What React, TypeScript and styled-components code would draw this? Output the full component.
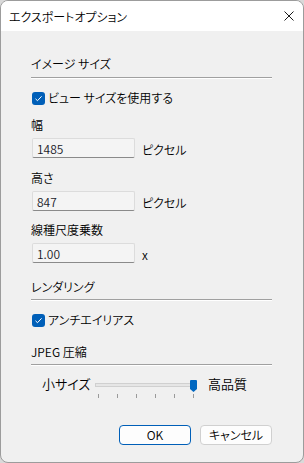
import styled, { createGlobalStyle } from 'styled-components';

const GlobalStyle = createGlobalStyle`
    html, body {
        margin: 0;
        padding: 0;
        background: #d9d9d9;
    }
    body {
        font-family: 'Noto Sans CJK JP', 'Noto Sans', sans-serif;
        font-size: 12px;
        font-weight: 350;
        font-feature-settings: 'palt';
        color: #000;
    }
`;

const Window = styled.div`
    width: 304px;
    height: 463px;
    box-sizing: border-box;
    border: 1px solid #9c9c9c;
    border-radius: 8px;
    background: #f0f0f0;
    overflow: hidden;
    display: flex;
    flex-direction: column;
`;

const TitleBar = styled.div`
    height: 30px;
    flex-shrink: 0;
    background: #ffffff;
    display: flex;
    align-items: center;
    justify-content: space-between;
    padding: 0 9px 0 8px;
`;

const Title = styled.div`
    font-size: 12px;
    line-height: 16px;
    margin-top: 1px;
`;

const CloseButton = styled.div`
    width: 10px;
    height: 10px;
    display: flex;
    margin-top: -1px;
`;

const Body = styled.div`
    display: flex;
    flex-direction: column;
    padding: 25px 31px 0 30px;
`;

const SectionTitle = styled.div`
    line-height: 16px;
    height: 16px;
    margin-top: ${(props: any) => props.gap || 0}px;
`;

const Separator = styled.div`
    height: 0;
    border-top: 1px solid #a0a0a0;
    border-bottom: 1px solid #ffffff;
    margin-top: ${(props: any) => props.gap || 5}px;
`;

const CheckRow = styled.label`
    display: flex;
    align-items: center;
    gap: 3px;
    height: 16px;
    line-height: 16px;
    margin-top: 11px;
`;

const CheckBox = styled.span`
    width: 13px;
    height: 13px;
    border-radius: 3px;
    background: #005fb8;
    display: flex;
    align-items: center;
    justify-content: center;
    margin-left: 1px;
`;

const FieldLabel = styled.div`
    line-height: 16px;
    height: 16px;
    margin-top: ${(props: any) => props.gap || 11}px;
`;

const FieldRow = styled.div`
    display: flex;
    align-items: center;
    margin-top: 5px;
`;

const TextBox = styled.div`
    width: 103px;
    height: 20px;
    box-sizing: border-box;
    margin-left: 1px;
    background: #f4f4f4;
    border: 1px solid #dcdcdc;
    border-bottom: 1px solid #8a8a8a;
    border-radius: 2px;
    padding-left: 4px;
    display: flex;
    align-items: center;
    color: #1b1b2a;
    font-size: 12px;
`;

const Unit = styled.div`
    margin-left: 7px;
    margin-top: 2px;
`;

const SliderRow = styled.div`
    display: flex;
    align-items: flex-start;
    margin-top: 10px;
    height: 25px;
`;

const SliderLabel = styled.div`
    box-sizing: border-box;
    line-height: 16px;
    width: ${(props: any) => props.w}px;
    padding-left: ${(props: any) => props.pl || 0}px;
    font-size: 13px;
`;

const Slider = styled.div`
    position: relative;
    width: 104px;
    height: 25px;
`;

const Track = styled.div`
    position: absolute;
    left: 2px;
    top: 7px;
    width: 98px;
    height: 4px;
    box-sizing: border-box;
    background: #e6e6e6;
    border: 1px solid #d0d0d0;
`;

const Thumb = styled.div`
    position: absolute;
    left: 97px;
    top: 4px;
    width: 7px;
    height: 12px;
    display: flex;
`;

const Ticks = styled.div`
    position: absolute;
    left: 5px;
    top: 18px;
    width: 96px;
    display: flex;
    justify-content: space-between;
`;

const Tick = styled.span`
    width: 1px;
    height: 4px;
    background: #9a9a9a;
`;

const ButtonRow = styled.div`
    display: flex;
    justify-content: flex-end;
    gap: 9px;
    margin-top: 24px;
    margin-right: 0;
`;

const Button = styled.button`
    width: 72px;
    height: 20px;
    box-sizing: border-box;
    border-radius: 4px;
    background: #fdfdfd;
    border: 1px solid ${(props: any) => (props.primary ? '#005fb8' : '#d0d0d0')};
    font-family: inherit;
    font-size: 12px;
    font-weight: 350;
    font-feature-settings: 'palt';
    color: #000;
    padding: 0;
    line-height: 16px;
`;

const Check = () => (
    <svg width="9" height="9" viewBox="0 0 9 9">
        <path d="M1.5 4.8 L3.5 6.7 L7.6 2.3" fill="none" stroke="#fff" strokeWidth="1" />
    </svg>
);

const App = () => {
    return (
        <>
            <GlobalStyle />
            <Window>
                <TitleBar>
                    <Title>エクスポートオプション</Title>
                    <CloseButton>
                        <svg width="10" height="10" viewBox="0 0 10 10">
                            <path d="M0.5 0.5 L9.5 9.5 M9.5 0.5 L0.5 9.5" stroke="#1a1a1a" strokeWidth="1" />
                        </svg>
                    </CloseButton>
                </TitleBar>
                <Body>
                    <SectionTitle>イメージ サイズ</SectionTitle>
                    <Separator />
                    <CheckRow>
                        <CheckBox>
                            <Check />
                        </CheckBox>
                        ビュー サイズを使用する
                    </CheckRow>
                    <FieldLabel>幅</FieldLabel>
                    <FieldRow>
                        <TextBox>1485</TextBox>
                        <Unit>ピクセル</Unit>
                    </FieldRow>
                    <FieldLabel gap={12}>高さ</FieldLabel>
                    <FieldRow>
                        <TextBox>847</TextBox>
                        <Unit>ピクセル</Unit>
                    </FieldRow>
                    <FieldLabel>線種尺度乗数</FieldLabel>
                    <FieldRow>
                        <TextBox>1.00</TextBox>
                        <Unit>x</Unit>
                    </FieldRow>
                    <SectionTitle gap={16}>レンダリング</SectionTitle>
                    <Separator gap={4} />
                    <CheckRow>
                        <CheckBox>
                            <Check />
                        </CheckBox>
                        アンチエイリアス
                    </CheckRow>
                    <SectionTitle gap={16}>JPEG 圧縮</SectionTitle>
                    <Separator gap={4} />
                    <SliderRow>
                        <SliderLabel w={62} pl={11}>小サイズ</SliderLabel>
                        <Slider>
                            <Track />
                            <Ticks>
                                {[0, 1, 2, 3, 4, 5].map((i) => (
                                    <Tick key={i} />
                                ))}
                            </Ticks>
                            <Thumb>
                                <svg width="7" height="12" viewBox="0 0 7 12">
                                    <path d="M0 1 Q0 0 1 0 L6 0 Q7 0 7 1 L7 9 L3.5 12 L0 9 Z" fill="#0067c0" />
                                </svg>
                            </Thumb>
                        </Slider>
                        <SliderLabel w={50} pl={11}>高品質</SliderLabel>
                    </SliderRow>
                    <ButtonRow>
                        <Button primary>OK</Button>
                        <Button>キャンセル</Button>
                    </ButtonRow>
                </Body>
            </Window>
        </>
    );
};

export default App;
